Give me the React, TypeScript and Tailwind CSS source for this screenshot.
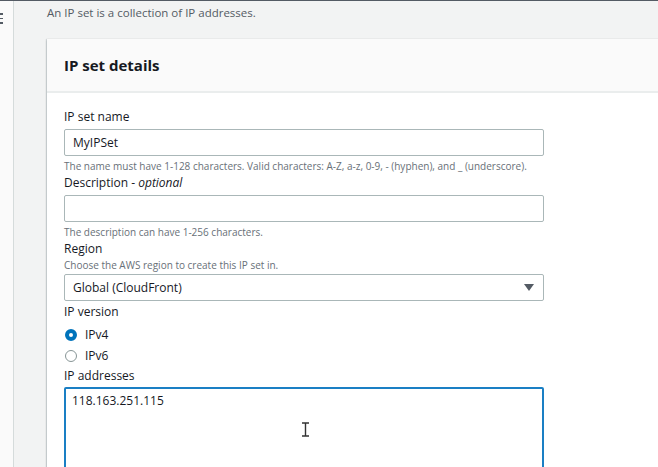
import React from "react";

const font = { fontFamily: "'Open Sans', 'Noto Sans', sans-serif" };

function Field({
  label,
  optional,
  hint,
  className,
  children,
}: {
  label: string;
  optional?: boolean;
  hint?: string;
  className?: string;
  children: React.ReactNode;
}) {
  return (
    <div className={className}>
      <div className="text-[12px] leading-[16px] text-[#16191f]">
        {label}
        {optional && (
          <>
            {" "}- <i>optional</i>
          </>
        )}
      </div>
      {hint && (
        <div className="mt-[1px] text-[10px] leading-[14px] text-[#687078]">
          {hint}
        </div>
      )}
      {children}
    </div>
  );
}

function Radio({ checked, label }: { checked?: boolean; label: string }) {
  return (
    <div className="flex items-center gap-[8px] h-[21px]">
      <span
        className={
          checked
            ? "w-[12px] h-[12px] rounded-full border-[4px] border-[#0073bb] bg-white"
            : "w-[12px] h-[12px] rounded-full border border-[#879596] bg-white"
        }
      />
      <span className="text-[12px] text-[#16191f]">{label}</span>
    </div>
  );
}

export default function App() {
  return (
    <div
      className="w-[658px] h-[467px] overflow-hidden flex border-t border-[#545b64] bg-[#f2f3f3]"
      style={font}
    >
      {/* collapsed side navigation */}
      <div className="w-[14px] shrink-0 bg-[#fafafa] border-r border-[#d5dbdb] pt-[12px]">
        <div className="flex flex-col gap-[3px] -ml-[8px] w-[11px]">
          <span className="h-[1.5px] bg-[#545b64]" />
          <span className="h-[1.5px] bg-[#545b64]" />
          <span className="h-[1.5px] bg-[#545b64]" />
        </div>
      </div>

      <div className="flex-1 min-w-0 pl-[33px]">
        <p className="mt-[4px] text-[11.5px] leading-[16px] text-[#545b64]">
          An IP set is a collection of IP addresses.
        </p>

        <div className="mt-[18px] -mr-[60px] bg-white shadow-[0_1px_2px_rgba(0,28,36,0.3),-1px_0_1px_rgba(0,28,36,0.1)]">
          <div className="h-[54px] flex items-center px-[17px] bg-[#fafafa] border-b-2 border-[#eaeded]">
            <h2 className="text-[15px] font-bold text-[#16191f]">IP set details</h2>
          </div>

          <div className="pl-[17px] pt-[16px] w-[497px]">
            <Field label="IP set name">
              <div className="mt-[4px] h-[27px] rounded-[2px] border border-[#aab7b8] flex items-center px-[8px] text-[12px] text-[#16191f]">
                MyIPSet
              </div>
              <div className="mt-[3px] text-[10px] leading-[14px] text-[#687078] whitespace-nowrap">
                The name must have 1-128 characters. Valid characters: A-Z, a-z, 0-9, - (hyphen), and _ (underscore).
              </div>
            </Field>

            <Field label="Description" optional className="mt-[2px]">
              <div className="mt-[4px] h-[27px] rounded-[2px] border border-[#aab7b8]" />
              <div className="mt-[3px] text-[10px] leading-[14px] text-[#687078]">
                The description can have 1-256 characters.
              </div>
            </Field>

            <Field
              label="Region"
              hint="Choose the AWS region to create this IP set in."
              className="mt-[2px]"
            >
              <div className="mt-[2px] h-[27px] rounded-[2px] border border-[#aab7b8] flex items-center justify-between pl-[8px] pr-[9px] text-[12px] text-[#16191f]">
                <span>Global (CloudFront)</span>
                <svg width="10" height="7" viewBox="0 0 10 7">
                  <path d="M0 0h10L5 7z" fill="#545b64" />
                </svg>
              </div>
            </Field>

            <Field label="IP version" className="mt-[3px]">
              <div className="mt-[4px] pl-[1px]">
                <Radio checked label="IPv4" />
                <Radio label="IPv6" />
              </div>
            </Field>

            <Field label="IP addresses" className="mt-[2px]">
              <div className="relative mt-[3px] h-[100px] rounded-[2px] border-2 border-[#1a7fc4] px-[6px] pt-[3px] text-[12px] text-[#16191f]">
                118.163.251.115
                <svg
                  className="absolute left-[236px] top-[33px]"
                  width="7"
                  height="15"
                  viewBox="0 0 7 15"
                >
                  <path d="M0 1h7M0 14h7M3.5 1v13" stroke="#333" strokeWidth="1.4" />
                </svg>
              </div>
            </Field>
          </div>
        </div>
      </div>
    </div>
  );
}
